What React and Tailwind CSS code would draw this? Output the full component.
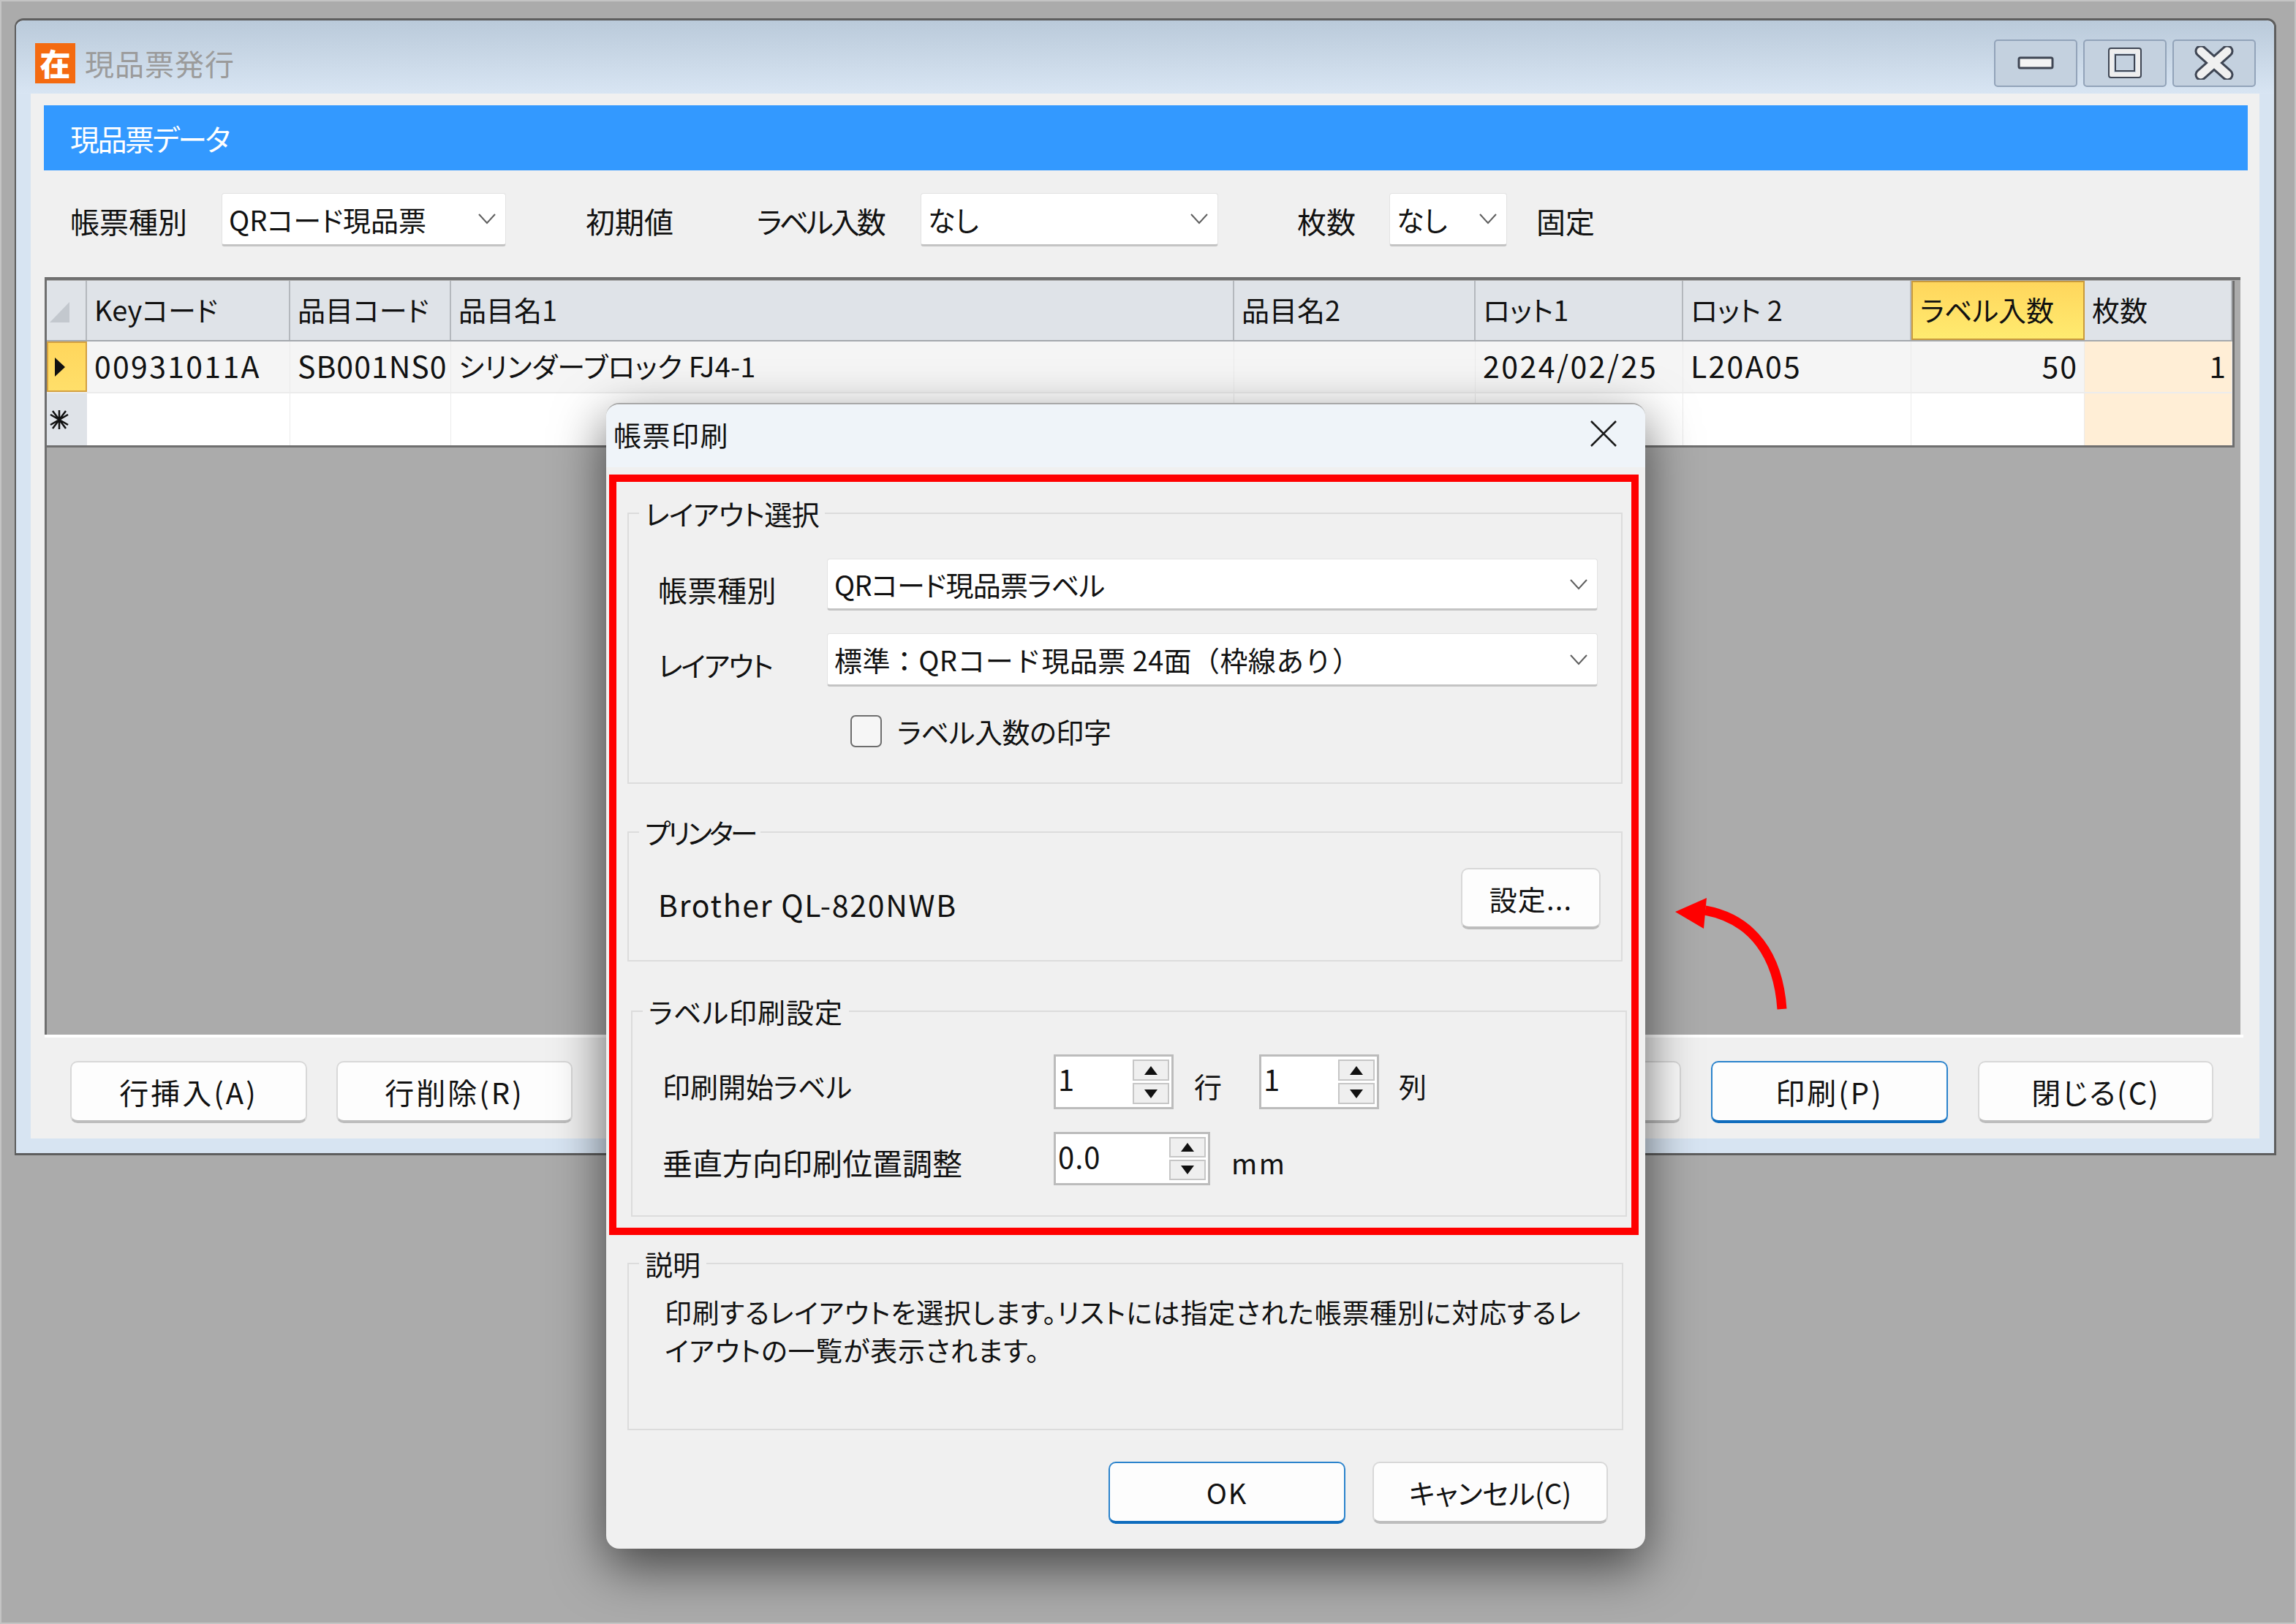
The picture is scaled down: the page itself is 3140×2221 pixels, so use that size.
const Chevron = () => (
  <svg width="26" height="16" viewBox="0 0 26 16" className="shrink-0">
    <path d="M2 2 L13 14 L24 2" fill="none" stroke="#5f5f5f" strokeWidth="2" />
  </svg>
);

const Combo = ({ className, children }) => (
  <div
    className={`flex items-center justify-between bg-white border border-[#e2e2e2] border-b-[3px] border-b-[#c4c4c4] rounded-[4px] pl-[9px] pr-[12px] text-[38px] text-[#111] whitespace-nowrap ${className}`}
  >
    <span>{children}</span>
    <Chevron />
  </div>
);

const Btn = ({ primary, className = "", children }) => (
  <div
    className={`flex items-center justify-center bg-[#fdfdfd] rounded-[10px] text-[38px] text-[#111] whitespace-nowrap border-2 border-b-[4px] ${
      primary ? "border-[#2b83cc] border-b-[#0f6cbd]" : "border-[#d8d8d8] border-b-[#bdbdbd]"
    } ${className}`}
  >
    {children}
  </div>
);

const Spin = ({ className, value }) => (
  <div className={`flex justify-between bg-white border-[3px] border-[#bcbcbc] pl-[3px] pr-[3px] py-[4px] text-[40px] text-[#111] ${className}`}>
    <span className="leading-[52px] tracking-[1px]">{value}</span>
    <div className="w-[50px] flex flex-col gap-[3px]">
      <div className="flex-1 flex items-center justify-center bg-[#efefef] border-2 border-[#c6c6c6]">
        <svg width="20" height="14" viewBox="0 0 20 14"><path d="M10 1 L19 13 L1 13 Z" fill="#111" /></svg>
      </div>
      <div className="flex-1 flex items-center justify-center bg-[#efefef] border-2 border-[#c6c6c6]">
        <svg width="20" height="14" viewBox="0 0 20 14"><path d="M1 1 L19 1 L10 13 Z" fill="#111" /></svg>
      </div>
    </div>
  </div>
);

const Group = ({ title, className, titleClass = "", children }) => (
  <fieldset className={`border-2 border-[#dcdcdc] ${className}`}>
    <legend className={`ml-[14px] px-[8px] text-[38px] leading-[48px] text-[#111] ${titleClass}`}>{title}</legend>
    {children}
  </fieldset>
);

const columns = [
  { w: "w-[278px]", head: "Keyコード", row: "00931011A", track: "text-[41px] tracking-[2.3px]" },
  { w: "w-[220px]", head: "品目コード", row: "SB001NS0", track: "text-[41px] tracking-[1px]" },
  { w: "w-[1071px]", head: "品目名1", row: "シリンダーブロック FJ4-1", track: "tracking-[0.2px]" },
  { w: "w-[330px]", head: "品目名2", row: "", track: "" },
  { w: "w-[284px]", head: "ロット1", row: "2024/02/25", track: "text-[41px] tracking-[2.5px]" },
  { w: "w-[312px]", head: "ロット 2", row: "L20A05", track: "text-[41px] tracking-[2.3px]" },
  { w: "w-[237px]", head: "ラベル入数", row: "50", track: "text-[41px] tracking-[2px]", right: true, active: true },
  { w: "w-[202px]", head: "枚数", row: "1", track: "text-[41px]", right: true, tint: true },
];

const WinBtn = ({ children }) => (
  <div className="w-[114px] h-[65px] flex items-center justify-center rounded-[5px] border-2 border-[#92a3b9] bg-[#c4d1df]">
    {children}
  </div>
);

const DataTable = () => (
  <div className="w-fit border-r-[3px] border-b-[3px] border-[#6f6f6f] text-[38px] text-[#111]">
    {/* header */}
    <div className="flex h-[83px] border-b-2 border-[#a4a8ad] bg-[#dfe3e8]">
      <div className="w-[55px] flex items-end pl-[4px] pb-[24px] border-r-2 border-[#b4b8bd]">
        <svg width="28" height="28" viewBox="0 0 28 28"><path d="M27 0 L27 28 L0 28 Z" fill="#c3c8ce" /></svg>
      </div>
      {columns.map((c) => (
        <div
          key={c.head}
          className={`${c.w} flex items-center pl-[10px] pb-[5px] whitespace-nowrap border-r-2 ${
            c.active
              ? "bg-gradient-to-b from-[#ffd65c] to-[#ffeb70] border-2 border-[#c99a3c]"
              : "border-[#b4b8bd]"
          }`}
        >
          {c.head}
        </div>
      ))}
    </div>
    {/* data row */}
    <div className="flex h-[71px] bg-[#f5f5f5] border-b-2 border-[#ececec]">
      <div className="w-[55px] flex items-center pl-[8px] bg-gradient-to-b from-[#ffd65c] to-[#ffdf6a] border-2 border-[#d3a040]">
        <svg width="16" height="26" viewBox="0 0 16 26"><path d="M1 0 L15 13 L1 26 Z" fill="#111" /></svg>
      </div>
      {columns.map((c) => (
        <div
          key={c.head}
          className={`${c.w} flex items-center pl-[10px] pr-[8px] pb-[4px] whitespace-nowrap border-r border-[#ebebeb] ${c.track} ${
            c.right ? "justify-end" : ""
          } ${c.tint ? "bg-[#ffeed6]" : ""}`}
        >
          {c.row}
        </div>
      ))}
    </div>
    {/* new row */}
    <div className="flex h-[71px] bg-white">
      <div className="w-[55px] flex items-center pl-[3px] bg-[#dfe3e8]">
        <svg width="28" height="30" viewBox="0 0 28 30">
          <path d="M14 2 V28 M2 8 L26 22 M26 8 L2 22 M5 3 L23 27 M23 3 L5 27" stroke="#111" strokeWidth="2.5" />
        </svg>
      </div>
      {columns.map((c) => (
        <div key={c.head} className={`${c.w} border-r border-[#ebebeb] ${c.tint ? "bg-[#ffeed6]" : ""}`} />
      ))}
    </div>
  </div>
);

const App = () => {
  return (
    <div className="relative w-[3140px] h-[2221px] overflow-hidden bg-[#ababab] border-2 border-[#c4c4c4] font-['Noto_Sans_CJK_JP',sans-serif] [font-feature-settings:'palt'] pt-[23px] pl-[18px]">
      {/* main window */}
      <div className="w-[3093px] h-[1555px] flex flex-col rounded-t-[12px] bg-[#d7e4f2] border-t-[3px] border-r-[3px] border-b-[3px] border-l-2 border-[#5e5e5e]">
        <div className="h-[100px] shrink-0 flex items-center justify-between bg-gradient-to-b from-[#bacada] to-[#d8e5f3] rounded-t-[12px] pt-[16px] pl-[26px] pr-[25px]">
          <div className="flex items-center gap-[13px]">
            <div className="w-[55px] h-[55px] flex items-center justify-center bg-[#f46a10] text-white text-[42px] font-black leading-none">在</div>
            <span className="text-[40px] text-[#9b9b9b] tracking-[1px]">現品票発行</span>
          </div>
          <div className="flex gap-[8px]">
            <WinBtn>
              <svg width="50" height="20" viewBox="0 0 50 20"><rect x="2" y="3" width="46" height="14" rx="2" fill="#f4f4f4" stroke="#3f4654" strokeWidth="3" /></svg>
            </WinBtn>
            <WinBtn>
              <svg width="46" height="42" viewBox="0 0 46 42">
                <rect x="4" y="4" width="38" height="34" rx="2" fill="#c4d1df" stroke="#eeeeee" strokeWidth="8" />
                <rect x="1" y="1" width="44" height="40" rx="3" fill="none" stroke="#3f4654" strokeWidth="2" />
                <rect x="10" y="10" width="26" height="22" fill="none" stroke="#3f4654" strokeWidth="2" />
              </svg>
            </WinBtn>
            <WinBtn>
              <svg width="54" height="46" viewBox="0 0 54 46">
                <path d="M9 7 L45 39 M45 7 L9 39" stroke="#3f4654" strokeWidth="17" strokeLinecap="round" />
                <path d="M9 7 L45 39 M45 7 L9 39" stroke="#f0f0f0" strokeWidth="11" strokeLinecap="round" />
              </svg>
            </WinBtn>
          </div>
        </div>

        <div className="h-[1429px] shrink-0 mx-[20px] bg-[#f0f0f0] flex flex-col">
          <div className="mt-[16px] ml-[18px] mr-[16px] h-[89px] flex items-center pl-[36px] bg-[#3399ff] text-white text-[40px] tracking-[-2.5px]">現品票データ</div>

          {/* toolbar */}
          <div className="h-[146px] pb-[12px] flex items-center text-[40px] text-[#111] whitespace-nowrap">
            <span className="ml-[54px] w-[207px] mt-[4px]">帳票種別</span>
            <Combo className="w-[389px] h-[73px]">QRコード現品票</Combo>
            <span className="ml-[109px] w-[234px] mt-[4px]">初期値</span>
            <span className="w-[224px] mt-[4px] tracking-[-4px]">ラベル入数</span>
            <Combo className="w-[407px] h-[73px]">なし</Combo>
            <span className="ml-[108px] w-[126px] mt-[4px]">枚数</span>
            <Combo className="w-[161px] h-[73px]">なし</Combo>
            <span className="ml-[40px] mt-[4px]">固定</span>
          </div>

          {/* grid area */}
          <div className="h-[1036px] ml-[19px] mr-[26px] bg-[#ababab] border-t-[4px] border-l-[3px] border-[#6f6f6f] pt-[1px]">
            <DataTable />
          </div>
          <div className="h-[4px] ml-[19px] mr-[22px] bg-white" />

          {/* bottom buttons */}
          <div className="mt-[32px] flex">
            <Btn className="ml-[54px] w-[324px] h-[85px]"><span className="text-[40px] tracking-[3px]">行挿入(A)</span></Btn>
            <Btn className="ml-[40px] w-[323px] h-[85px]"><span className="text-[40px] tracking-[3px]">行削除(R)</span></Btn>
            <Btn className="ml-[1192px] w-[324px] h-[85px]" />
            <Btn primary className="ml-[41px] w-[324px] h-[85px]"><span className="text-[40px] tracking-[3px]">印刷(P)</span></Btn>
            <Btn className="ml-[41px] w-[322px] h-[85px]"><span className="text-[40px] tracking-[2px]">閉じる(C)</span></Btn>
          </div>
        </div>
      </div>

      {/* dialog */}
      <div className="absolute left-[827px] top-[549px] w-[1421px] h-[1567px] rounded-[18px] bg-[#f0f0f0] border-t-2 border-[#a8a8a8] shadow-[0_24px_70px_rgba(0,0,0,0.6)] overflow-hidden">
        <div className="h-[86px] flex items-center justify-between pl-[10px] pr-[38px] pb-[6px] bg-[#eff4f9] text-[38px] text-[#111]">
          <span className="tracking-[1.5px]">帳票印刷</span>
          <svg width="38" height="38" viewBox="0 0 38 38"><path d="M2 2 L36 36 M36 2 L2 36" stroke="#1a1a1a" strokeWidth="2.5" /></svg>
        </div>

        <Group title="レイアウト選択" titleClass="tracking-[-0.5px]" className="ml-[29px] mt-[39px] w-[1361px] h-[394px]">
          <div className="mt-[38px] ml-[40px] flex">
            <span className="w-[231px] mt-[12px] text-[40px] tracking-[0.5px] text-[#111]">帳票種別</span>
            <Combo className="w-[1054px] h-[71px]"><span className="tracking-[-0.7px]">QRコード現品票ラベル</span></Combo>
          </div>
          <div className="mt-[30px] ml-[40px] flex">
            <span className="w-[231px] mt-[14px] text-[38px] tracking-[-2px] text-[#111]">レイアウト</span>
            <Combo className="w-[1054px] h-[73px]">
              <span className="[font-feature-settings:normal] tracking-[0.4px]">標準：QRコード現品票 24面（枠線あり）</span>
            </Combo>
          </div>
          <div className="mt-[32px] ml-[303px] flex items-center gap-[21px] text-[38px] text-[#111]">
            <div className="w-[43px] h-[44px] rounded-[7px] border-2 border-[#6e6e6e] bg-[#f6f6f6]" />
            <span className="tracking-[-0.4px]">ラベル入数の印字</span>
          </div>
        </Group>

        <Group title="プリンター" titleClass="tracking-[-4px]" className="ml-[29px] mt-[42px] w-[1361px] h-[201px]">
          <div className="mt-[25px] pl-[40px] pr-[28px] flex items-center justify-between">
            <span className="mt-[16px] text-[41px] text-[#111] tracking-[1.7px]">Brother QL-820NWB</span>
            <Btn className="w-[191px] h-[84px]"><span className="tracking-[1.2px]">設定...</span></Btn>
          </div>
        </Group>

        <Group title="ラベル印刷設定" titleClass="tracking-[1px]" className="ml-[34px] mt-[44px] w-[1362px] h-[305px]">
          <div className="mt-[35px] ml-[41px] flex items-center text-[38px] text-[#111]">
            <span className="w-[535px] mt-[10px]">印刷開始ラベル</span>
            <Spin className="w-[164px] h-[75px]" value="1" />
            <span className="ml-[28px] w-[89px] mt-[10px]">行</span>
            <Spin className="w-[164px] h-[75px]" value="1" />
            <span className="ml-[27px] mt-[10px]">列</span>
          </div>
          <div className="mt-[31px] ml-[41px] flex items-center text-[38px] text-[#111]">
            <span className="w-[535px] mt-[10px] text-[41px]">垂直方向印刷位置調整</span>
            <Spin className="w-[214px] h-[73px]" value="0.0" />
            <span className="ml-[29px] mt-[10px] tracking-[2.5px]">mm</span>
          </div>
        </Group>

        <Group title="説明" className="ml-[29px] mt-[40px] w-[1362px] h-[252px]">
          <p className="mt-[16px] ml-[49px] text-[37px] tracking-[0.8px] leading-[52px] text-[#111] whitespace-nowrap">
            印刷するレイアウトを選択します。リストには指定された帳票種別に対応するレ
            <br />
            イアウトの一覧が表示されます。
          </p>
        </Group>

        <div className="mt-[43px] pr-[51px] flex justify-end gap-[37px]">
          <Btn primary className="w-[324px] h-[85px]"><span className="tracking-[2px]">OK</span></Btn>
          <Btn className="w-[322px] h-[85px]">キャンセル(C)</Btn>
        </div>
      </div>

      {/* annotation: red frame and arrow */}
      <div className="absolute left-[831px] top-[647px] w-[1408px] h-[1040px] border-[10px] border-[#ff0000]" />
      <svg className="absolute left-[2280px] top-[1215px]" width="170" height="175" viewBox="0 0 170 175">
        <path d="M155 163 C150 90 115 40 50 28" fill="none" stroke="#ff0000" strokeWidth="13" />
        <path d="M9 30 L52 11 L48 53 Z" fill="#ff0000" />
      </svg>
    </div>
  );
};

export default App;
